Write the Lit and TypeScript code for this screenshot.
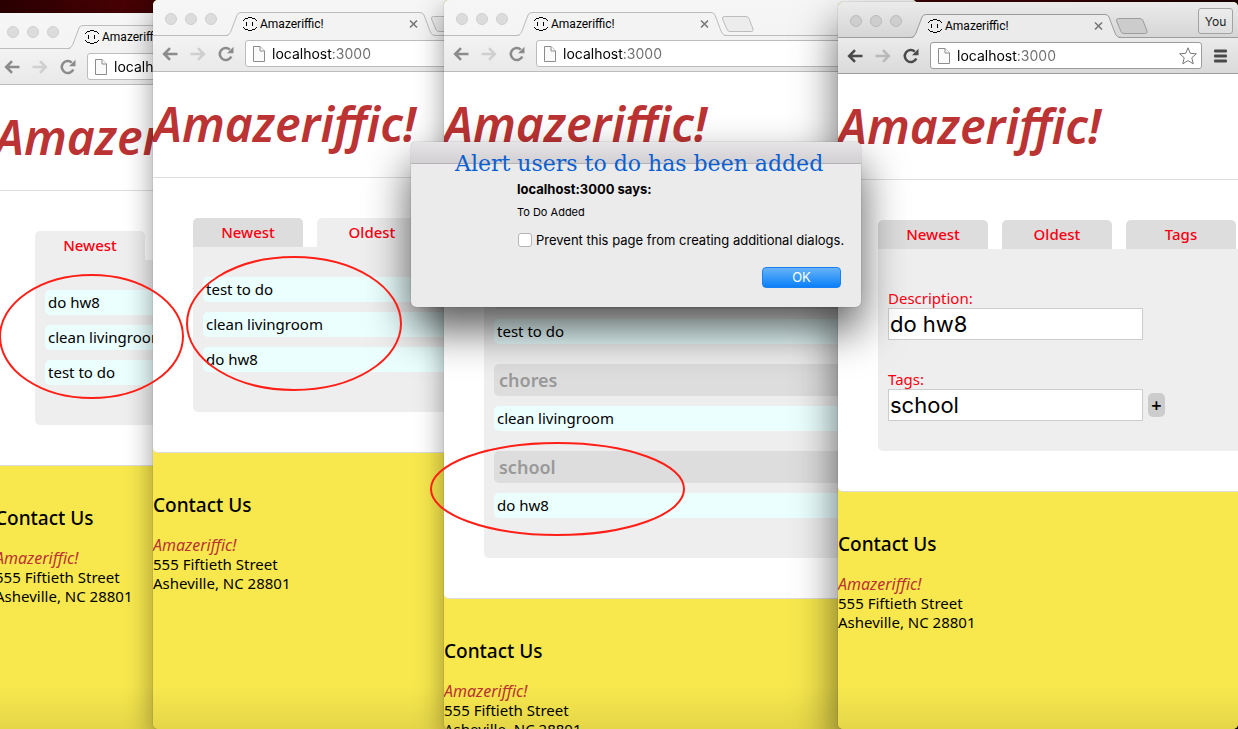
import { LitElement, html, css, svg, nothing } from "lit";
import { customElement, property } from "lit/decorators.js";
import { classMap } from "lit/directives/class-map.js";
import { styleMap } from "lit/directives/style-map.js";

interface Group {
  tag?: string;
  items: string[];
}

interface Win {
  id: string;
  x: number;
  y: number;
  width: number;
  height: number;
  active?: boolean;
  tab: string;
  groups?: Group[];
}

const WINDOWS: Win[] = [
  { id: "w1", x: -5, y: 13, width: 400, height: 760, tab: "Newest", groups: [{ items: ["do hw8", "clean livingroom", "test to do"] }] },
  { id: "w2", x: 153, y: 0, width: 400, height: 729, tab: "Oldest", groups: [{ items: ["test to do", "clean livingroom", "do hw8"] }] },
  {
    id: "w3", x: 444, y: 0, width: 473, height: 729, tab: "Tags",
    groups: [
      { tag: "test", items: ["test to do"] },
      { tag: "chores", items: ["clean livingroom"] },
      { tag: "school", items: ["do hw8"] },
    ],
  },
  { id: "w4", x: 838, y: 2, width: 400, height: 727, active: true, tab: "Add" },
];

const MARKS = [
  { x: -1, y: 274, w: 185, h: 125 },
  { x: 186, y: 256, w: 216, h: 135 },
  { x: 430, y: 442, w: 255, h: 94 },
];

@customElement("browser-window")
export class BrowserWindow extends LitElement {
  @property({ type: Boolean, reflect: true }) active = false;

  static styles = css`
    :host {
      display: flex;
      flex-direction: column;
      overflow: hidden;
      border-radius: 5px;
      background: #f8e84e;
      font-family: Inter, "Liberation Sans", sans-serif;
      --icon: #8b8b8b;
      --faint: #cfcfcf;
      --strip: linear-gradient(#f6f6f6, #f4f4f4);
      --tab: #f3f3f3;
      --bar: linear-gradient(#f3f3f3, #e9e9e9);
      --line: #bcbcbc;
      --light: #dcdcdc;
      --newtab: #ececec;
      box-shadow: 0 0 1px rgba(0, 0, 0, 0.5), 0 10px 28px rgba(0, 0, 0, 0.4);
    }
    :host([active]) {
      --icon: #4a4a4a;
      --faint: #b9b9b9;
      --strip: linear-gradient(#ebebeb, #d5d5d5);
      --tab: #ebebeb;
      --bar: linear-gradient(#ebebeb, #dadada);
      --line: #9c9c9c;
      --light: #cecece;
      --newtab: #cccccc;
      box-shadow: 0 0 1px rgba(0, 0, 0, 0.6), 0 22px 44px rgba(0, 0, 0, 0.6);
    }
    .strip {
      display: flex;
      flex: none;
      height: 36px;
      background: var(--strip);
      box-shadow: inset 0 -1px var(--line);
    }
    .lights {
      display: flex;
      gap: 8px;
      padding: 13px 9px 0 12px;
    }
    .light {
      box-sizing: border-box;
      width: 12px;
      height: 12px;
      border: 1px solid var(--line);
      border-color: color-mix(in srgb, var(--line) 70%, white);
      border-radius: 50%;
      background: var(--light);
    }
    .tab {
      display: grid;
      width: 210px;
      margin-top: 11px;
      height: 25px;
    }
    .tab > * {
      grid-area: 1 / 1;
    }
    .shape-fill {
      fill: var(--tab);
    }
    .shape-line {
      fill: none;
      stroke: var(--line);
    }
    .tab-row {
      display: flex;
      align-items: center;
      gap: 3px;
      padding: 0 17px;
    }
    .tab-row svg {
      flex: none;
    }
    .tab-title {
      flex: 1;
      color: #000;
      font-family: Roboto, sans-serif;
      font-size: 12px;
    }
    button {
      display: flex;
      align-items: center;
      justify-content: center;
      padding: 0;
      border: 0;
      background: none;
      font: inherit;
    }
    .newtab {
      width: 33px;
      height: 18px;
      margin: 15px 0 0 -6px;
    }
    .newtab path {
      fill: var(--newtab);
      stroke: var(--line);
    }
    .you {
      box-sizing: border-box;
      width: 35px;
      height: 26px;
      margin: 6px 5px 0 auto;
      border: 1px solid #a3a3a3;
      border-radius: 3px;
      background: linear-gradient(#ededed, #dedede);
      color: #222;
      font-size: 12px;
    }
    .toolbar {
      display: flex;
      flex: none;
      box-sizing: border-box;
      height: 36px;
      padding: 4px 4px 0 3px;
      background: var(--bar);
      border-bottom: 1px solid var(--line);
    }
    .nav {
      width: 28px;
      height: 27px;
    }
    .field {
      display: flex;
      flex: 1;
      align-items: center;
      box-sizing: border-box;
      min-width: 0;
      height: 27px;
      margin-left: 5px;
      padding: 0 4px 0 7px;
      border: 1px solid var(--line);
      border-radius: 3px;
      background: #fff;
    }
    input {
      flex: 1;
      min-width: 0;
      margin-left: 7px;
      padding: 0;
      border: 0;
      outline: 0;
      font: 14px/20px Inter, "Liberation Sans", sans-serif;
      color: #000;
      background: linear-gradient(90deg, #000 60px, #6d6d6d 60px);
      -webkit-background-clip: text;
      background-clip: text;
      -webkit-text-fill-color: transparent;
    }
    .menu {
      box-sizing: border-box;
      width: 32px;
      height: 27px;
      padding-left: 4px;
    }
    .page {
      flex: 1;
      overflow: hidden;
      background: #f8e84e;
    }
  `;

  render() {
    return html`
      <div class="strip">
        <div class="lights"><span class="light"></span><span class="light"></span><span class="light"></span></div>
        <div class="tab">
          <svg width="210" height="25" aria-hidden="true">
            <path class="shape-fill" d="M0 25C3 25 4 23 5 20L11 4Q12 1 15 1H194Q197 1 198 4L204 20C205 23 207 25 210 25Z" />
            <path class="shape-line" d="M0 24.5C3 24 4 22 5 20L11 4Q12 1.500 15 1.500H194Q197 1.500 198 4L204 20C205 23 207 24.500 210 24.500" />
          </svg>
          <div class="tab-row">
            <svg width="14" height="14" viewBox="0 0 14 14" shape-rendering="crispEdges" aria-hidden="true">
              <path
                d="M5 0h4v1H5zM2 1h3v1H2zM9 1h3v1H9zM1 2h1v1H1zM12 2h1v1h-1zM0 3h1v1H0zM13 3h1v1h-1zM3 5h1v4H3zM9 5h1v4H9zM0 10h1v1H0zM13 10h1v1h-1zM1 11h1v1H1zM12 11h1v1h-1zM2 12h3v1H2zM9 12h3v1H9zM5 13h4v1H5z"
              />
            </svg>
            <span class="tab-title">Amazeriffic!</span>
            <button aria-label="Close tab">
              <svg width="11" height="11" viewBox="0 0 11 11" aria-hidden="true">
                <path d="M2 2.500L9 9.500M9 2.500L2 9.500" stroke="#777" stroke-width="1.600" />
              </svg>
            </button>
          </div>
        </div>
        <button class="newtab" aria-label="New tab">
          <svg width="33" height="18" aria-hidden="true">
            <path d="M3.500 1.500H25Q27 1.500 28 3.500L32 14Q32.500 16.500 30.500 16.500H9Q7 16.500 6 14.500L1.500 4Q1 1.500 3.500 1.500Z" />
          </svg>
        </button>
        ${this.active ? html`<button class="you">You</button>` : nothing}
      </div>
      <div class="toolbar">
        <button class="nav" aria-label="Back">
          <svg width="16" height="14" viewBox="0 0 16 14" fill="none" stroke="var(--icon)" stroke-width="2.600" aria-hidden="true">
            <path d="M15.500 7H3M8 1.200L2.200 7L8 12.800" />
          </svg>
        </button>
        <button class="nav" aria-label="Forward">
          <svg width="16" height="14" viewBox="0 0 16 14" fill="none" stroke="var(--faint)" stroke-width="2.600" aria-hidden="true">
            <path d="M0.500 7H13M8 1.200L13.800 7L8 12.800" />
          </svg>
        </button>
        <button class="nav" aria-label="Reload">
          <svg width="16" height="16" viewBox="0 0 16 16" aria-hidden="true">
            <path d="M13.300 10.500A6 6 0 1 1 11.800 3.600" fill="none" stroke="var(--icon)" stroke-width="2.500" />
            <path d="M15.500 0.800V7.200H9Z" fill="var(--icon)" />
          </svg>
        </button>
        <div class="field">
          <svg width="12" height="16" viewBox="0 0 12 16" fill="#fafafa" stroke="#8c8c8c" aria-hidden="true">
            <path d="M0.500 0.500H7L11.500 5V15.500H0.500Z" />
            <path d="M7 0.500V5H11.500" />
          </svg>
          <input aria-label="Address" .value=${"localhost:3000"} />
          ${this.active
            ? html`<button aria-label="Bookmark this page">
                <svg width="18" height="18" viewBox="0 0 18 18" fill="none" stroke="#777" stroke-linejoin="round" aria-hidden="true">
                  <path d="M9 0.800L11.300 6.300L17.300 6.800L12.800 10.800L14.200 16.800L9 13.600L3.800 16.800L5.200 10.800L0.700 6.800L6.700 6.300Z" />
                </svg>
              </button>`
            : nothing}
        </div>
        ${this.active
          ? html`<button class="menu" aria-label="Menu">
              <svg width="13" height="14" viewBox="0 0 13 14" fill="#4a4a4a" aria-hidden="true">
                <rect y="0.500" width="13" height="3" rx="1" />
                <rect y="5.500" width="13" height="3" rx="1" />
                <rect y="10.500" width="13" height="3" rx="1" />
              </svg>
            </button>`
          : nothing}
      </div>
      <div class="page"><slot></slot></div>
    `;
  }
}

@customElement("todo-page")
export class TodoPage extends LitElement {
  @property() tab = "";
  @property({ attribute: false }) groups?: Group[];

  static styles = css`
    :host {
      display: block;
      font: 15px/19px "Noto Sans", "Open Sans", sans-serif;
      color: #000;
    }
    main {
      min-width: 400px;
      border-bottom: 1px solid #ddd;
      border-radius: 0 0 0 5px;
      background: #fff;
    }
    h1 {
      margin: 0;
      padding: 24px 0 25px;
      border-bottom: 1px solid #ddd;
      color: #b33;
      font-size: 48px;
      line-height: 56px;
      font-weight: 600;
      font-style: italic;
    }
    .content {
      padding: 40px 0 40px 40px;
    }
    nav {
      display: flex;
      gap: 14px;
    }
    nav a {
      flex: none;
      width: 110px;
      border-radius: 5px 5px 0 0;
      background: #ddd;
      color: #f80012;
      line-height: 29px;
      font-weight: 500;
      text-align: center;
      text-decoration: none;
    }
    nav a.on {
      background: #eee;
    }
    .panel {
      display: flex;
      flex-direction: column;
      gap: 20px;
      padding: 30px 10px 40px;
      border-radius: 0 0 0 5px;
      background: #eee;
    }
    .panel.form {
      gap: 30px;
      padding: 40px 10px 30px;
    }
    .group {
      display: flex;
      flex-direction: column;
      gap: 10px;
    }
    h3 {
      margin: 0;
      padding: 0 5px;
      border-radius: 5px;
      background: #ddd;
      color: #999;
      font-size: 18px;
      line-height: 32px;
      font-weight: 600;
    }
    ul {
      display: flex;
      flex-direction: column;
      gap: 10px;
      margin: 0;
      padding: 0;
      list-style: none;
    }
    li {
      padding: 0 3px;
      border-radius: 5px;
      background: #ebffff;
      line-height: 25px;
    }
    label {
      display: block;
      color: #f80012;
    }
    .row {
      display: flex;
      align-items: center;
      gap: 5px;
    }
    input {
      box-sizing: border-box;
      width: 255px;
      height: 32px;
      padding: 0 1px;
      border: 1px solid #ccc;
      background: #fff;
      color: #000;
      font: 22px/30px Inter, "Liberation Sans", sans-serif;
    }
    .add {
      width: 17px;
      height: 24px;
      padding: 0;
      border: 0;
      border-radius: 5px;
      background: #ccc;
      font: 600 18px/24px "Noto Sans", sans-serif;
    }
    footer {
      padding: 38px 0 0;
    }
    h4 {
      margin: 0 0 17px;
      font-size: 19px;
      line-height: 28px;
      font-weight: 500;
    }
    address {
      font-style: normal;
    }
    em {
      color: #b33;
      font-size: 16px;
    }
  `;

  private renderField(id: string, label: string, value: string, add = false) {
    return html`<div>
      <label for=${id}>${label}</label>
      <div class="row">
        <input id=${id} .value=${value} />
        ${add ? html`<button class="add" aria-label="Add">+</button>` : nothing}
      </div>
    </div>`;
  }

  render() {
    return html`
      <main>
        <h1>Amazeriffic!</h1>
        <div class="content">
          <nav>
            ${["Newest", "Oldest", "Tags"].map(
              (t) => html`<a href="#${t}" class=${classMap({ on: t === this.tab })}>${t}</a>`
            )}
          </nav>
          ${this.groups
            ? html`<div class="panel">
                ${this.groups.map(
                  (g) => html`<div class="group">
                    ${g.tag ? html`<h3>${g.tag}</h3>` : nothing}
                    <ul>
                      ${g.items.map((i) => html`<li>${i}</li>`)}
                    </ul>
                  </div>`
                )}
              </div>`
            : html`<div class="panel form">
                ${this.renderField("description", "Description:", "do hw8")}
                ${this.renderField("tags", "Tags:", "school", true)}
              </div>`}
        </div>
      </main>
      <footer>
        <h4>Contact Us</h4>
        <address><em>Amazeriffic!</em><br />555 Fiftieth Street<br />Asheville, NC 28801</address>
      </footer>
    `;
  }
}

@customElement("alert-dialog")
export class AlertDialog extends LitElement {
  static styles = css`
    :host {
      display: block;
      border-radius: 5px;
      background: #ebebeb;
      box-shadow: 0 0 1px rgba(0, 0, 0, 0.6), 0 22px 44px rgba(0, 0, 0, 0.65);
      color: #000;
      font: 13px/18px Inter, "Liberation Sans", sans-serif;
    }
    .bar {
      height: 21px;
      border-bottom: 1px solid #b4b2b4;
      border-radius: 5px 5px 0 0;
      background: linear-gradient(#e6e4e6, #d2d0d2);
    }
    .body {
      display: flex;
      flex-direction: column;
      padding: 16px 20px 19px 106px;
    }
    h2 {
      margin: 0 0 5px;
      font-size: 13px;
      line-height: 18px;
      font-weight: 700;
    }
    p {
      margin: 0 0 10px;
      font-size: 11px;
      line-height: 18px;
    }
    label {
      display: flex;
      align-items: center;
      gap: 4px;
      margin-bottom: 18px;
      white-space: nowrap;
    }
    input {
      appearance: none;
      box-sizing: border-box;
      flex: none;
      width: 14px;
      height: 14px;
      margin: 0 0 0 1px;
      border: 1px solid #b4b4b4;
      border-radius: 3px;
      background: #fff;
    }
    button {
      align-self: flex-end;
      width: 79px;
      height: 21px;
      padding: 0;
      border: 1px solid #1a80f0;
      border-radius: 4px;
      background: linear-gradient(#66b3f7, #0a80fb);
      color: #fff;
      font: 13px/19px Inter, "Liberation Sans", sans-serif;
    }
  `;

  render() {
    return html`
      <div class="bar"></div>
      <div class="body">
        <h2>localhost:3000 says:</h2>
        <p>To Do Added</p>
        <label><input type="checkbox" />Prevent this page from creating additional dialogs.</label>
        <button>OK</button>
      </div>
    `;
  }
}

@customElement("app-root")
export class AppRoot extends LitElement {
  static styles = css`
    :host {
      display: block;
      position: relative;
      height: 100vh;
      overflow: hidden;
      background: linear-gradient(90deg, #2b0002, #4a0205 10%, #230002 20%, #3c0204 80%, #1c0001);
    }
    browser-window,
    alert-dialog,
    .note,
    .mark,
    .shade {
      position: absolute;
    }
    .shade {
      left: 0;
      right: 0;
      bottom: 0;
      height: 44px;
      background: linear-gradient(transparent, rgba(0, 0, 0, 0.08));
      pointer-events: none;
    }
    .dialog {
      left: 411px;
      top: 142px;
      width: 450px;
    }
    .note {
      left: 455px;
      top: 149px;
      margin: 0;
      color: #0a5fd2;
      font: 22px/30px "DejaVu Serif", serif;
      white-space: nowrap;
    }
    .mark {
      pointer-events: none;
    }
    .mark ellipse {
      fill: none;
      stroke: #ff1f17;
      stroke-width: 2;
    }
  `;

  render() {
    return html`
      ${WINDOWS.map(
        (w) => html`<browser-window
          ?active=${!!w.active}
          style=${styleMap({ left: `${w.x}px`, top: `${w.y}px`, width: `${w.width}px`, height: `${w.height}px` })}
        >
          <todo-page .tab=${w.tab} .groups=${w.groups}></todo-page>
        </browser-window>`
      )}
      <div class="shade"></div>
      <alert-dialog class="dialog" role="alertdialog"></alert-dialog>
      <p class="note">Alert users to do has been added</p>
      ${MARKS.map(
        (m) => html`<svg
          class="mark"
          width=${m.w}
          height=${m.h}
          style=${styleMap({ left: `${m.x}px`, top: `${m.y}px` })}
          aria-hidden="true"
        >
          ${svg`<ellipse cx=${m.w / 2} cy=${m.h / 2} rx=${m.w / 2 - 1} ry=${m.h / 2 - 1}></ellipse>`}
        </svg>`
      )}
    `;
  }
}
